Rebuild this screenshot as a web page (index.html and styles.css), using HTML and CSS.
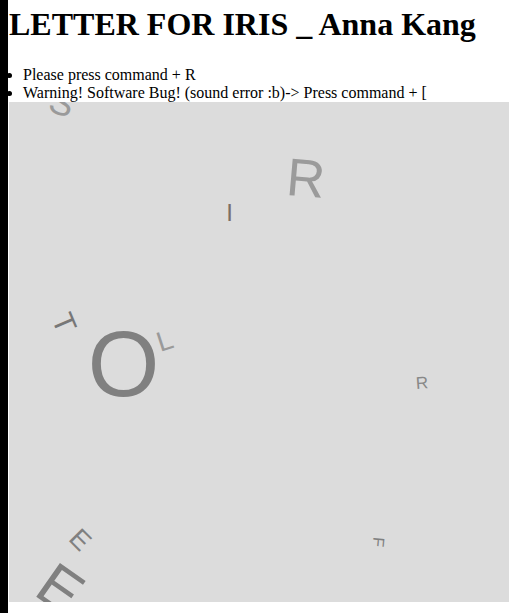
FILE: index.html
```html
<!DOCTYPE html>
<html>
<head>
<meta charset="utf-8">
<title>LETTER FOR IRIS</title>
<link rel="stylesheet" href="styles.css">
</head>
<body>
<h1 class="title">LETTER FOR IRIS _ Anna Kang</h1>
<ul class="notes">
  <li>Please press command + R</li>
  <li>Warning! Software Bug! (sound error :b)-&gt; Press command + [</li>
</ul>
<div class="canvas">
  <span class="ch ch-s">S</span>
  <span class="ch ch-r1">R</span>
  <span class="ch ch-i">I</span>
  <span class="ch ch-t">T</span>
  <span class="ch ch-o">O</span>
  <span class="ch ch-l">L</span>
  <span class="ch ch-r2">R</span>
  <span class="ch ch-e1">E</span>
  <span class="ch ch-f">F</span>
  <span class="ch ch-e2">E</span>
</div>
</body>
</html>
```

FILE: styles.css
```css
html {
  height: 100%;
}
body {
  margin: 0;
  padding: 6px 0 0 1px;
  border-left: 8px solid #000;
  min-height: 100%;
  box-sizing: border-box;
  background: #fff;
  color: #000;
  font-family: "Liberation Serif", "Times New Roman", serif;
  font-size: 16px;
}
.title {
  margin: 0 0 23px 0;
  font-size: 32px;
  font-weight: bold;
}
.notes {
  margin: 0;
  padding-left: 14px;
}
.canvas {
  position: relative;
  width: 500px;
  height: 500px;
  background: #dcdcdc;
  overflow: hidden;
}
.ch {
  position: absolute;
  font-family: "Liberation Sans", Arial, sans-serif;
  line-height: 1;
  color: #808080;
  white-space: nowrap;
}
.ch-s {
  left: 53px; top: 1px;
  font-size: 36px;
  color: #9a9a9a;
  transform: translate(-50%, -50%) rotate(20deg);
}
.ch-r1 {
  left: 297px; top: 76px;
  font-size: 53px;
  color: #9b9b9b;
  transform: translate(-50%, -50%) rotate(5deg);
}
.ch-i {
  left: 220.5px; top: 111px;
  font-size: 24px;
  color: #7b6f66;
  transform: translate(-50%, -50%);
}
.ch-t {
  left: 55px; top: 221px;
  font-size: 30px;
  color: #777;
  transform: translate(-50%, -50%) rotate(67deg);
}
.ch-o {
  left: 114.5px; top: 262px;
  font-size: 92px;
  color: #808080;
  transform: translate(-50%, -50%);
}
.ch-l {
  left: 156px; top: 238.5px;
  font-size: 28px;
  color: #9a9a9a;
  transform: translate(-50%, -50%) rotate(-18deg);
}
.ch-r2 {
  left: 412.5px; top: 280.5px;
  font-size: 17px;
  color: #888;
  transform: translate(-50%, -50%) rotate(-4deg);
}
.ch-e1 {
  left: 71px; top: 438px;
  font-size: 27px;
  color: #808080;
  transform: translate(-50%, -50%) rotate(45deg);
}
.ch-f {
  left: 368.5px; top: 440px;
  font-size: 16px;
  color: #808080;
  transform: translate(-50%, -50%) rotate(95deg);
}
.ch-e2 {
  left: 51.4px; top: 487px;
  font-size: 60px;
  color: #808080;
  transform: translate(-50%, -50%) rotate(35deg);
}
```
